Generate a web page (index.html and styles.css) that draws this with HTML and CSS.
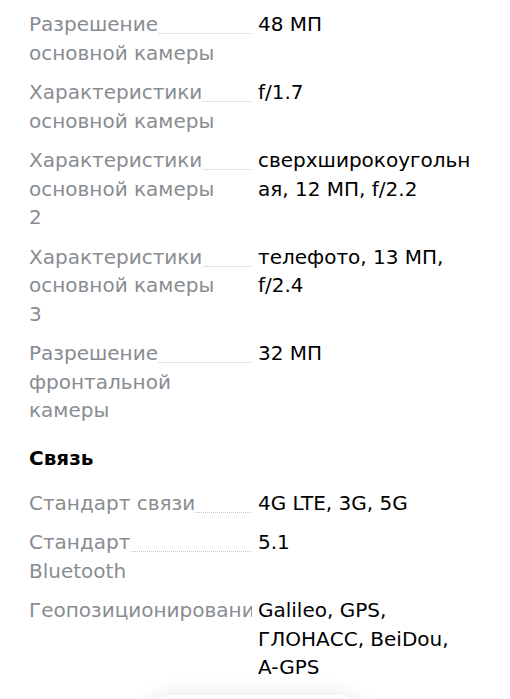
FILE: index.html
```html
<!DOCTYPE html>
<html lang="ru">
<head>
<meta charset="utf-8">
<link rel="stylesheet" href="styles.css">
</head>
<body>
<div class="specs">
  <dl class="group">
    <div class="row"><dt class="label"><span class="text">Разрешение основной камеры</span></dt><dd class="value">48 МП</dd></div>
    <div class="row"><dt class="label"><span class="text">Характеристики основной камеры</span></dt><dd class="value">f/1.7</dd></div>
    <div class="row"><dt class="label"><span class="text">Характеристики основной камеры 2</span></dt><dd class="value">сверхширокоугольн<br>ая, 12 МП, f/2.2</dd></div>
    <div class="row"><dt class="label"><span class="text">Характеристики основной камеры 3</span></dt><dd class="value">телефото, 13 МП, f/2.4</dd></div>
    <div class="row"><dt class="label"><span class="text">Разрешение фронтальной камеры</span></dt><dd class="value">32 МП</dd></div>
  </dl>
  <h3 class="group-title">Связь</h3>
  <dl class="group">
    <div class="row"><dt class="label"><span class="text">Стандарт связи</span></dt><dd class="value">4G LTE, 3G, 5G</dd></div>
    <div class="row"><dt class="label"><span class="text">Стандарт Bluetooth</span></dt><dd class="value">5.1</dd></div>
    <div class="row"><dt class="label"><span class="text nowrap">Геопозиционирование</span></dt><dd class="value">Galileo, GPS, ГЛОНАСС, BeiDou, <span class="nowrap">A-GPS</span></dd></div>
  </dl>
</div>
<div class="floating-shadow"></div>
</body>
</html>
```

FILE: styles.css
```css
html, body {
  margin: 0;
  padding: 0;
  background: #fff;
}
body {
  font-family: "DejaVu Sans", "Open Sans", sans-serif;
  font-size: 20px;
  line-height: 28.5px;
  color: #000;
  overflow: hidden;
  height: 699px;
  position: relative;
}
.specs {
  padding: 10px 28px 0 29px;
}
.group {
  margin: 0;
  display: flex;
  flex-direction: column;
  gap: 11px;
}
.row {
  display: grid;
  grid-template-columns: 223px 1fr;
  column-gap: 6px;
}
.label {
  position: relative;
  margin: 0;
  padding-right: 23px;
  color: #898c91;
  overflow: hidden;
}
.label::before {
  content: "";
  position: absolute;
  left: 0;
  right: 0;
  top: 23px;
  border-bottom: 1px dotted #c4c6c9;
}
.label .text {
  position: relative;
  background: #fff;
}
.nowrap {
  white-space: nowrap;
}
.value {
  margin: 0;
  color: #000;
}
.group-title {
  margin: 19px 0 17px;
  font-size: 20px;
  font-weight: 700;
  line-height: 28px;
}
.floating-shadow {
  position: absolute;
  left: 142px;
  width: 226px;
  top: 695px;
  height: 60px;
  border-radius: 30px;
  background: #fff;
  box-shadow: 0 0 20px rgba(0,0,0,0.1);
}
```
